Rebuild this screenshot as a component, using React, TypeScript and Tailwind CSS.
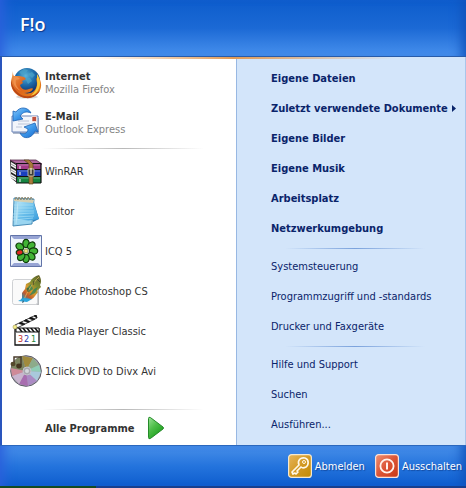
import React from 'react';

interface ProgramEntry {
  name: string;
  detail?: string;
  icon: React.ReactNode;
}

interface PlaceEntry {
  name: string;
  submenu?: boolean;
}

function FirefoxIcon() {
  return (
    <svg viewBox="0 0 32 32" className="size-8 shrink-0" aria-hidden="true">
      <defs>
        <radialGradient id="globe" cx="45%" cy="30%" r="70%">
          <stop offset="0" stopColor="#5ab4da" />
          <stop offset="0.5" stopColor="#1f6dab" />
          <stop offset="1" stopColor="#0b2a66" />
        </radialGradient>
        <linearGradient id="fox" x1="0" y1="0" x2="1" y2="1">
          <stop offset="0" stopColor="#f0a050" />
          <stop offset="0.45" stopColor="#dc611c" />
          <stop offset="1" stopColor="#e88a18" />
        </linearGradient>
      </defs>
      <ellipse cx="17" cy="30" rx="11" ry="1.6" fill="#d5d5d5" />
      <circle cx="17" cy="14" r="13" fill="url(#globe)" />
      <path d="M9 5l5-3 4 1-2 3-4 2zM18 7l4-2 3 3-3 3zM15 11l5 0 2 3-4 3z" fill="#4ba4ca" opacity="0.7" />
      <path
        d="M3 4c0 3 0 4 1 5l5 0c2 0 3 1 5 1l2 2-4 2 1 2-3 2c1 4 5 6 9 4 2-1 4-1 4 0-2 3-5 4-9 4 8 2 13-3 13-10l-1-5c1 1 2 1 2 2l-1-5c6 7 5 15 0 19-6 6-16 5-22-1-4-4-5-11-3-16z"
        fill="url(#fox)"
      />
      <path d="M27 7c6 8 3 19-7 23 5-5 8-9 7-16z" fill="#f8c83c" />
      <path d="M1 13c-1 8 5 16 14 18 8 1 13-3 15-8-4 5-9 7-15 6C8 28 3 22 1 13z" fill="#b74715" />
      <path d="M4 10c2-1 4 0 6 2l-4 1c-1 4 1 8 5 11-7-3-9-9-7-14z" fill="#f0914c" />
    </svg>
  );
}

function MailIcon() {
  return (
    <svg viewBox="0 0 32 32" className="size-8 shrink-0" aria-hidden="true">
      <defs>
        <linearGradient id="mailArrow" x1="0" y1="0" x2="1" y2="1">
          <stop offset="0" stopColor="#8ccbfa" />
          <stop offset="0.5" stopColor="#3c97ea" />
          <stop offset="1" stopColor="#1765c8" />
        </linearGradient>
      </defs>
      <path d="M3 11h26v16H3z" fill="#aeb8ca" />
      <path d="M2 9h26v16H2z" fill="#f2f5fb" stroke="#6a84b8" />
      <path d="M8 14h11M8 17h12M6 20h6" stroke="#b6c0d3" strokeWidth="0.9" />
      <path d="M22 9.500h4.500v5H22z" fill="#c0503c" stroke="#fff" strokeWidth="0.6" />
      <path
        d="M21 6C18 0 10-1 6 5L3 4l0 10 10-2-3-3c3-4 6-5 11-3z"
        fill="url(#mailArrow)"
        stroke="#1e63b5"
        strokeWidth="0.8"
      />
      <path
        d="M10 26c3 7 12 6 15-2l3 1-3-9-11 4 4 2c0 4-4 6-8 4z"
        fill="url(#mailArrow)"
        stroke="#1e63b5"
        strokeWidth="0.8"
      />
    </svg>
  );
}

function WinrarIcon() {
  return (
    <svg viewBox="0 0 32 32" className="size-8 shrink-0" aria-hidden="true">
      <path d="M0 5l7 4v19l-6-5z" fill="#222" />
      <path d="M1 7l5 3v4L1 11zM1 13l5 3v4l-5-3zM1 19l5 3v4l-5-3z" fill="#f3f3f3" />
      <path d="M1 9l5 3M1 15l5 3M1 21l5 3" stroke="#999" />
      <path d="M0 5h26l6 4H7z" fill="#b0679f" stroke="#421534" strokeWidth="0.7" />
      <path d="M7 9h24v5H7z" fill="#a33a87" />
      <path d="M7 15h24v6H7z" fill="#1a3fc0" />
      <path d="M7 22h24v6H7z" fill="#168541" />
      <path d="M8 10h22M8 16h22M8 23h22" stroke="#d9d8df" strokeWidth="0.7" opacity="0.6" />
      <path d="M10 11v3M10 17v3M10 24v3" stroke="#e3e0e6" strokeWidth="1.200" />
      <path d="M6 8.500h25M6 14.500h25M6 21.500h25M6 28h25M31 9v19" fill="none" stroke="#111" strokeWidth="1.200" />
      <path d="M14 5h5l4 4v20h-4V9z" fill="#a8793c" stroke="#56400e" strokeWidth="0.6" />
      <path d="M18 14h6v7h-6z" fill="#3b3b38" stroke="#d7d2ad" strokeWidth="0.8" />
      <path d="M21 13v6" stroke="#f4ecd0" strokeWidth="1.200" />
    </svg>
  );
}

function NotepadIcon() {
  return (
    <svg viewBox="0 0 32 32" className="size-8 shrink-0" aria-hidden="true">
      <defs>
        <linearGradient id="notePage" x1="0" y1="0" x2="1" y2="1">
          <stop offset="0" stopColor="#b4e4f8" />
          <stop offset="0.5" stopColor="#67bdea" />
          <stop offset="1" stopColor="#3a9bdb" />
        </linearGradient>
      </defs>
      <path d="M23 4l6 20-6 3z" fill="#2f82bb" />
      <path d="M4 3l20 1-2 25-19 2z" fill="#9ad5f0" stroke="#3c83b0" strokeWidth="0.9" />
      <path d="M9 6l14 0 6 18c-6 1-10 2-15 1L8 24z" fill="url(#notePage)" />
      <path d="M4 10l19 0M4 13l19 0M4 16l20 0M3 19l21-1M3 22l21-1M3 25l20-2" stroke="#b4e5f6" strokeWidth="0.6" />
      <path d="M8 7L6 29" stroke="#d0eef9" strokeWidth="0.6" />
      <path d="M4 4l20 1-1 3L4 6z" fill="#d5cfb2" />
      <path
        d="M5 5l1-3 2 3 1-3 2 3 1-3 2 3 1-3 2 3 1-3 2 3 1-3 2 3"
        fill="none"
        stroke="#8f8569"
        strokeWidth="0.9"
      />
    </svg>
  );
}

function IcqIcon() {
  return (
    <svg viewBox="0 0 32 32" className="size-8 shrink-0" aria-hidden="true">
      <path d="M0.500 0.500h31v31H0.500z" fill="#eef4fb" stroke="#6274a8" />
      <path d="M1 1h30l-3 3H4zM1 31h30l-3-3H4z" fill="#97a4d4" />
      <g fill="#42b436" stroke="#103c0b" strokeWidth="1.200">
        <ellipse cx="16" cy="8.500" rx="3.200" ry="4.200" />
        <ellipse cx="16" cy="8.500" rx="3.200" ry="4.200" transform="rotate(45 16 16)" />
        <ellipse cx="16" cy="8.500" rx="3.200" ry="4.200" transform="rotate(90 16 16)" />
        <ellipse cx="16" cy="8.500" rx="3.200" ry="4.200" transform="rotate(135 16 16)" />
        <ellipse cx="16" cy="8.500" rx="3.200" ry="4.200" transform="rotate(180 16 16)" />
        <ellipse cx="16" cy="8.500" rx="3.200" ry="4.200" transform="rotate(220 16 16)" />
        <ellipse cx="16" cy="8.500" rx="3.200" ry="4.200" transform="rotate(305 16 16)" />
        <ellipse cx="16" cy="9.500" rx="2.600" ry="3.400" fill="#df2a24" transform="rotate(258 16 16)" />
      </g>
      <circle cx="16" cy="16" r="2" fill="#f1e47c" stroke="#6b7426" strokeWidth="0.6" />
    </svg>
  );
}

function PhotoshopIcon() {
  return (
    <svg viewBox="0 0 32 32" className="size-8 shrink-0" aria-hidden="true">
      <defs>
        <linearGradient id="feather" x1="1" y1="0" x2="0.2" y2="1">
          <stop offset="0" stopColor="#5d5a2c" />
          <stop offset="0.35" stopColor="#7b8a2f" />
          <stop offset="0.6" stopColor="#d89a2c" />
          <stop offset="0.8" stopColor="#c4592c" />
          <stop offset="1" stopColor="#1697cb" />
        </linearGradient>
      </defs>
      <path d="M4 6h22l3 3v21H4z" fill="#b9bbbe" />
      <rect x="2.500" y="4.500" width="25" height="25" rx="2" fill="#fafafa" stroke="#cfd1d4" />
      <path
        d="M29 0c-4 1-7 3-9 7l-4 2-1 5-3 4 0 5-2 3 6 0c4-1 7-2 9-5l3-4-1-1 4-4-1-2c2-3 1-7-1-10z"
        fill="url(#feather)"
      />
      <path d="M21 9l2 5-4 3-3-3zM24 14l4-2-3 6-6 3z" fill="#2f8558" opacity="0.8" />
      <path d="M29 2C23 8 17 16 14 25" fill="none" stroke="#e0bd5a" strokeWidth="0.8" />
      <path d="M27 4l3 3M24 6l-1 4M18 13l0 4" stroke="#3a3f24" strokeWidth="0.8" />
      <path d="M8 26l6-3 8 1-5 3z" fill="#2da6dc" />
      <path d="M13 25l-1 3 2-1z" fill="#28526b" />
    </svg>
  );
}

function ClapperIcon() {
  return (
    <svg viewBox="0 0 32 32" className="size-8 shrink-0" aria-hidden="true">
      <path d="M5 10L26 0l1 3L7 13z" fill="#fff" stroke="#111" strokeWidth="0.8" />
      <path d="M9 8.500l4 1.500 2-1-4-2zM14 6l4 1.500 2-1-4-2zM19 3.500L23 5l2-1-4-2zM24 1l2 1.500 1 0L26 0z" fill="#111" stroke="#111" strokeWidth="0.6" />
      <path d="M5 14h24v16H5z" fill="#fff" stroke="#111" strokeWidth="1.300" />
      <path d="M6 13h23v4H6z" fill="#fff" stroke="#111" />
      <path d="M8 13h2l3 4h-2zM12 13h2l3 4h-2zM16 13h2l3 4h-2zM20 13h2l3 4h-2zM24 13h2l3 4h-2z" fill="#111" />
      <circle cx="5" cy="12" r="2" fill="#f4ee8c" stroke="#a39856" strokeWidth="0.6" />
      <g fontFamily="DejaVu Sans Condensed, DejaVu Sans, sans-serif" fontSize="9">
        <text x="8" y="27" fill="#c32a2a">3</text>
        <text x="14" y="27" fill="#2a3cb0">2</text>
        <text x="21" y="27" fill="#26853a">1</text>
      </g>
    </svg>
  );
}

function DiscIcon() {
  return (
    <svg viewBox="0 0 32 32" className="size-8 shrink-0" aria-hidden="true">
      <circle cx="16" cy="16" r="15.300" fill="#a4a2ad" stroke="#5b5b66" />
      <path d="M16 16L12 1l11 2z" fill="#a08a3c" />
      <path d="M16 16l7-13 6 7z" fill="#8dab8a" />
      <path d="M16 16l13-6 2 7z" fill="#8fcdb5" />
      <path d="M16 16l15 1-4 9z" fill="#a9c9dc" />
      <path d="M16 16l11 10-9 5z" fill="#ab8ac4" />
      <path d="M16 16l2 15-9-2z" fill="#a86db0" />
      <path d="M16 16L9 29l-7-8z" fill="#c9b4ce" />
      <path d="M16 16L2 21l-1-8z" fill="#cf8a98" />
      <path d="M16 16L1 13l5-9 6-3z" fill="#7d8560" />
      <circle cx="17" cy="16" r="4" fill="#a6a7af" stroke="#c2c4ca" />
      <circle cx="17" cy="16" r="2" fill="#d4d7db" />
      <path d="M4 9V2l7 0v8" fill="none" stroke="#4a3d2c" strokeWidth="1.500" />
      <ellipse cx="3" cy="9" rx="2.500" ry="2.200" fill="#54492b" />
      <ellipse cx="9" cy="11" rx="2.800" ry="2.400" fill="#44351e" />
    </svg>
  );
}

function ArrowIcon() {
  return (
    <svg viewBox="0 0 18 24" className="h-6 w-[18px]" aria-hidden="true">
      <defs>
        <linearGradient id="goArrow" x1="0" y1="0" x2="0.7" y2="1">
          <stop offset="0" stopColor="#9be397" />
          <stop offset="0.45" stopColor="#4fbe4a" />
          <stop offset="1" stopColor="#159b15" />
        </linearGradient>
      </defs>
      <path d="M1.500 2.500Q1.500 0.500 3.500 1.600L16 11q1 1 0 2L3.500 22.400Q1.500 23.500 1.500 21.500z" fill="url(#goArrow)" stroke="#258a2a" />
    </svg>
  );
}

function KeyIcon() {
  return (
    <svg viewBox="0 0 24 24" className="size-6" aria-hidden="true">
      <defs>
        <linearGradient id="keyTile" x1="0" y1="0" x2="1" y2="1">
          <stop offset="0" stopColor="#e7b65c" />
          <stop offset="0.5" stopColor="#d39a25" />
          <stop offset="1" stopColor="#c18a04" />
        </linearGradient>
      </defs>
      <rect x="0.600" y="0.600" width="22.800" height="22.800" rx="3" fill="url(#keyTile)" stroke="#f6e9ce" strokeWidth="1.200" />
      <path
        d="M11 11C9 6 13 3 17 4c4 1 4 7 1 9-2 1-4 1-5 0l-4 4 1 1-2 2-1-1-2 1-1-2z"
        fill="none"
        stroke="#fff8e7"
        strokeWidth="1.700"
        strokeLinejoin="round"
      />
      <circle cx="16" cy="8" r="1.500" fill="none" stroke="#fff8e7" />
    </svg>
  );
}

function PowerIcon() {
  return (
    <svg viewBox="0 0 24 24" className="size-6" aria-hidden="true">
      <defs>
        <linearGradient id="powerTile" x1="0" y1="0" x2="1" y2="1">
          <stop offset="0" stopColor="#ef9274" />
          <stop offset="0.5" stopColor="#dc5435" />
          <stop offset="1" stopColor="#c63714" />
        </linearGradient>
      </defs>
      <rect x="0.600" y="0.600" width="22.800" height="22.800" rx="3" fill="url(#powerTile)" stroke="#fbe0d6" strokeWidth="1.200" />
      <circle cx="12" cy="12" r="6.600" fill="none" stroke="#fff3ed" strokeWidth="1.800" />
      <path d="M12 8.500v7" stroke="#fff3ed" strokeWidth="2" />
    </svg>
  );
}

const pinned: ProgramEntry[] = [
  { name: 'Internet', detail: 'Mozilla Firefox', icon: <FirefoxIcon /> },
  { name: 'E-Mail', detail: 'Outlook Express', icon: <MailIcon /> },
];

const recent: ProgramEntry[] = [
  { name: 'WinRAR', icon: <WinrarIcon /> },
  { name: 'Editor', icon: <NotepadIcon /> },
  { name: 'ICQ 5', icon: <IcqIcon /> },
  { name: 'Adobe Photoshop CS', icon: <PhotoshopIcon /> },
  { name: 'Media Player Classic', icon: <ClapperIcon /> },
  { name: '1Click DVD to Divx Avi', icon: <DiscIcon /> },
];

const folders: PlaceEntry[] = [
  { name: 'Eigene Dateien' },
  { name: 'Zuletzt verwendete Dokumente', submenu: true },
  { name: 'Eigene Bilder' },
  { name: 'Eigene Musik' },
  { name: 'Arbeitsplatz' },
  { name: 'Netzwerkumgebung' },
];

const settings: PlaceEntry[] = [
  { name: 'Systemsteuerung' },
  { name: 'Programmzugriff und -standards' },
  { name: 'Drucker und Faxgeräte' },
];

const tools: PlaceEntry[] = [{ name: 'Hilfe und Support' }, { name: 'Suchen' }, { name: 'Ausführen...' }];

function ProgramButton({ entry }: { entry: ProgramEntry }) {
  return (
    <button type="button" className="flex h-10 w-full items-center gap-[3px] pl-2 text-left">
      {entry.icon}
      <span className="flex flex-col leading-[13px]">
        <span className={entry.detail ? 'font-bold' : ''}>{entry.name}</span>
        {entry.detail && <span className="text-[#858585]">{entry.detail}</span>}
      </span>
    </button>
  );
}

function PlaceList({ entries, bold }: { entries: PlaceEntry[]; bold?: boolean }) {
  return (
    <div className={bold ? 'font-bold' : ''}>
      {entries.map((entry) => (
        <button
          key={entry.name}
          type="button"
          className="flex h-[30px] w-full items-center gap-1 pl-[34px] text-left whitespace-nowrap"
        >
          {entry.name}
          {entry.submenu && (
            <svg viewBox="0 0 4 7" className="h-[7px] w-1 shrink-0" aria-hidden="true">
              <path d="M0 0l4 3.500L0 7z" fill="#0a246a" />
            </svg>
          )}
        </button>
      ))}
    </div>
  );
}

function Separator({ tone }: { tone: 'gray' | 'blue' }) {
  return (
    <div
      className={
        tone === 'gray'
          ? 'mr-8 ml-10 mt-[5px] mb-[2px] h-px bg-linear-to-r from-transparent via-[#b8b8b8] to-transparent'
          : 'mr-10 ml-12 mt-[5px] mb-[2px] h-px bg-linear-to-r from-transparent via-[#7ba2dc] to-transparent'
      }
    />
  );
}

export default function App() {
  return (
    <div className="w-full bg-[#2350b8] font-['DejaVu_Sans_Condensed','DejaVu_Sans',sans-serif] text-[11px] leading-[13px]">
      {/* User name */}
      <header className="flex h-14 items-start bg-linear-to-b from-[#0d5dcc] via-[#1b69d5] to-[#4690ed] shadow-[inset_12px_0_12px_-8px_#2b5fdc,inset_-12px_0_12px_-8px_#1053bb]">
        <h1 className="pt-3 pl-5 font-['Open_Sans',sans-serif] text-lg leading-6 font-semibold text-white [text-shadow:1px_1px_1px_#10398c]">
          F!o
        </h1>
      </header>
      <div className="h-px bg-[#285ba9]" />

      <main className="relative grid grid-cols-[234fr_229fr] border-r border-l-2 border-r-[#a9c5ea] border-l-[#2a55bd]">
        {/* Orange glow below the header */}
        <div className="absolute inset-x-0 top-0 h-[2px] bg-linear-to-r from-transparent from-20% via-[#e09a56] to-transparent to-85%" />

        {/* Programs */}
        <section className="flex flex-col bg-white pt-[6px] pb-px text-[#333333]">
          {pinned.map((entry) => (
            <ProgramButton key={entry.name} entry={entry} />
          ))}
          <Separator tone="gray" />
          {recent.map((entry) => (
            <ProgramButton key={entry.name} entry={entry} />
          ))}
          <div className="mt-auto">
            <Separator tone="gray" />
            <button type="button" className="flex h-8 w-full items-center gap-3 pl-[43px] font-bold">
              Alle Programme
              <ArrowIcon />
            </button>
          </div>
        </section>

        {/* Places */}
        <section className="border-l border-[#98b8e3] bg-[#d3e5fa] pt-[6px] pb-[6px] text-[#0a246a]">
          <PlaceList entries={folders} bold />
          <Separator tone="blue" />
          <PlaceList entries={settings} />
          <Separator tone="blue" />
          <PlaceList entries={tools} />
        </section>
      </main>

      <footer className="flex h-[41px] items-center justify-end gap-[10px] border-t border-[#2b67bd] bg-linear-to-b from-[#468ee8] via-[#2474dd] to-[#0d5dce] pr-1 text-white shadow-[inset_12px_0_12px_-8px_#2b5fdc,inset_-12px_0_12px_-8px_#1053bb]">
        <button type="button" className="flex items-center gap-[3px] [text-shadow:1px_1px_1px_#12479c]">
          <KeyIcon />
          Abmelden
        </button>
        <button type="button" className="flex items-center gap-[3px] [text-shadow:1px_1px_1px_#12479c]">
          <PowerIcon />
          Ausschalten
        </button>
      </footer>

      {/* Upper edge of the taskbar */}
      <div className="flex h-[2px] bg-[#173f8f]">
        <div className="w-24 bg-[#134a22]" />
      </div>
    </div>
  );
}
